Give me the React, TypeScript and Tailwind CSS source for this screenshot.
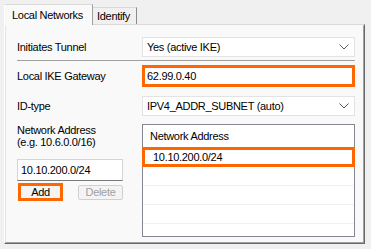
function Chevron() {
  return (
    <svg width="10" height="6" viewBox="0 0 10 6">
      <polyline points="0.5,0.5 5,5 9.5,0.5" fill="none" stroke="#5a5a5a" strokeWidth="1" />
    </svg>
  );
}

function Combo({ value }: { value: string }) {
  return (
    <div className="flex h-[20px] w-[213px] items-center justify-between border border-[#e3e3e3] bg-white pl-[4px] pr-[5px]">
      <span>{value}</span>
      <Chevron />
    </div>
  );
}

function App() {
  return (
    <div
      className="h-[249px] w-[371px] bg-[#f0f0f0] pl-[4px] pt-[4px] text-[11px] tracking-[-0.3px] text-black"
      style={{ fontFamily: '"Liberation Sans", Arial, sans-serif' }}
    >
      <div className="flex h-[20px] items-start">
        <div className="relative z-10 flex h-[21px] w-[89px] items-center border-l border-r border-t border-l-white border-r-[#a0a0a0] border-t-[#d9d9d9] bg-[#f9f9f9] pl-[7px]">
          Local Networks
        </div>
        <div className="mt-[3px] flex h-[17px] w-[44px] items-center border-r border-t border-r-[#8a8a8a] border-t-[#d9d9d9] bg-[#f0f0f0] pl-[4px]">
          Identify
        </div>
      </div>

      <div className="h-[220px] w-[361px] border border-b-[#696969] border-l-white border-r-[#696969] border-t-[#d9d9d9]">
        <div className="h-full w-full border border-b-[#a0a0a0] border-l-[#e3e3e3] border-r-[#a0a0a0] border-t-[#f9f9f9] bg-[#f9f9f9] pl-[11px] pt-[11px]">
          <div className="flex items-center">
            <div className="w-[125px]">Initiates Tunnel</div>
            <Combo value="Yes (active IKE)" />
          </div>
          <div className="mt-[3px] h-px w-[338px] bg-[#a0a0a0]" />

          <div className="mt-[4px] flex items-center">
            <div className="w-[125px]">Local IKE Gateway</div>
            <div className="flex h-[22px] w-[213px] items-center border-[3px] border-[#ff6600] bg-white pl-[2px]">
              62.99.0.40
            </div>
          </div>

          <div className="mt-[9px] flex items-center">
            <div className="w-[125px]">ID-type</div>
            <Combo value="IPV4_ADDR_SUBNET (auto)" />
          </div>

          <div className="mt-[8px] flex">
            <div className="w-[125px]">
              <div className="leading-[12px]">
                Network Address
                <br />
                (e.g. 10.6.0.0/16)
              </div>
              <div className="mt-[11px] flex h-[22px] w-[106px] items-center border border-[#d4d4d4] border-b-[#7a7a7a] bg-white pl-[3px]">
                10.10.200.0/24
              </div>
              <div className="mt-[2px] flex items-center">
                <button className="ml-px flex h-[18px] w-[45px] items-center justify-center border-[3px] border-[#ff6600] bg-[#f4f4f4]">
                  Add
                </button>
                <button className="ml-[15px] flex h-[15px] w-[45px] items-center justify-center rounded-[2px] border border-[#d0d0d0] bg-[#f4f4f4] text-[#a0a0a0]">
                  Delete
                </button>
              </div>
            </div>

            <div className="h-[113px] w-[213px] border border-[#828790] bg-white">
              <div className="flex h-[22px] items-center pl-[7px]">Network Address</div>
              <div className="-mx-px flex h-[20px] items-center border-[3px] border-[#ff6600] pl-[8px]">
                10.10.200.0/24
              </div>
              <div className="h-[19px] border-b border-[#f0f0f0]" />
              <div className="h-[19px] border-b border-[#f0f0f0]" />
              <div className="h-[19px] border-b border-[#f0f0f0]" />
            </div>
          </div>
        </div>
      </div>
    </div>
  );
}

export default App;
